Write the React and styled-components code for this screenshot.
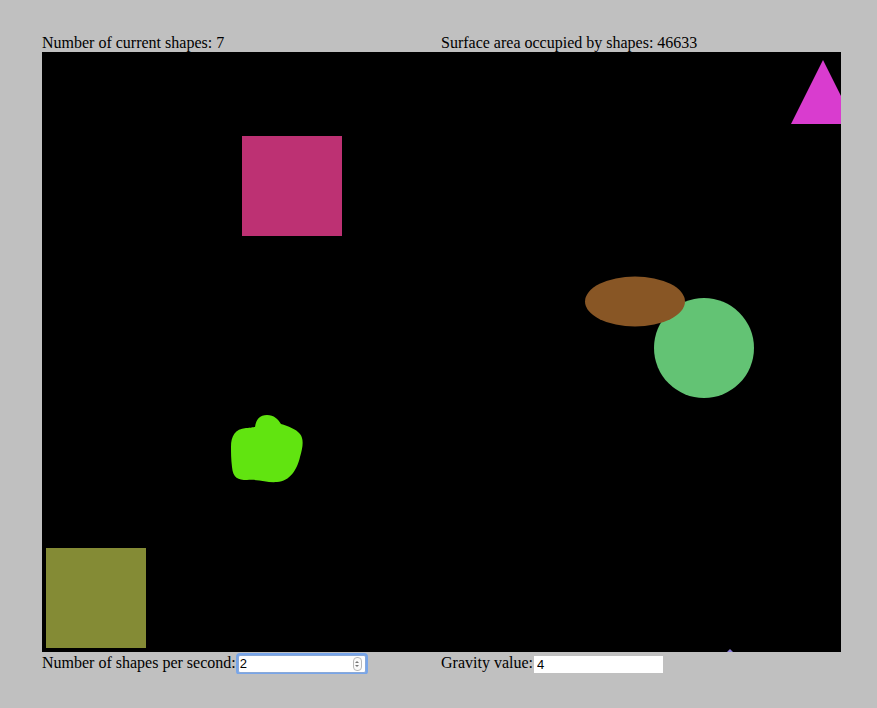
import React from "react";
import styled, { createGlobalStyle } from "styled-components";

const Global = createGlobalStyle`
  html, body { margin: 0; padding: 0; background: #c0c0c0; }
  body {
    font-family: "Liberation Serif", "Times New Roman", serif;
    font-size: 16px;
    color: #000;
  }
`;

const Page = styled.div`
  padding: 34px 0 0 42px;
`;

const Row = styled.div`
  display: grid;
  grid-template-columns: 399px 400px;
  width: 799px;
  align-items: center;
  height: ${(p) => p.$h}px;
  line-height: 18px;
`;

const Cell = styled.div`
  display: flex;
  align-items: center;
  white-space: nowrap;
`;

const Stage = styled.svg`
  display: block;
  width: 799px;
  height: 600px;
  background: #000;
`;

const Label = styled.span`
  margin-right: ${(p) => p.$gap}px;
`;

const NumberBox = styled.div`
  display: flex;
  align-items: center;
  width: 126px;
  height: 16px;
  margin-top: 1px;
  margin-left: 2px;
  background: #fff;
  border: 1px solid #8aa9d8;
  border-radius: 2px;
  box-shadow: 0 0 0 2px #77a5ea;
`;

const BareInput = styled.input`
  flex: 1;
  min-width: 0;
  border: none;
  outline: none;
  padding: 0 0 0 1px;
  margin: 0;
  height: 16px;
  background: transparent;
  font-family: "Liberation Sans", Arial, sans-serif;
  font-size: 13px;
  color: #000;
`;

const Spinner = styled.span`
  display: flex;
  flex-direction: column;
  align-items: center;
  justify-content: center;
  gap: 2px;
  width: 7px;
  height: 12px;
  margin-right: 3px;
  border: 1px solid #b8b8b8;
  border-radius: 4px;
  background: #fafafa;
`;

const Arrow = styled.span`
  width: 0;
  height: 0;
  border-left: 2px solid transparent;
  border-right: 2px solid transparent;
  ${(p) =>
    p.$up
      ? "border-bottom: 2px solid #777;"
      : "border-top: 2px solid #777;"}
`;

const TextInput = styled.input`
  width: 129px;
  height: 17px;
  box-sizing: border-box;
  border: none;
  outline: none;
  padding: 0 0 0 3px;
  margin: 2px 0 0 0;
  background: #fff;
  font-family: "Liberation Sans", Arial, sans-serif;
  font-size: 13px;
  color: #000;
`;

export default function App() {
  return (
    <>
      <Global />
      <Page>
        <Row $h={18}>
          <Cell>Number of current shapes: 7</Cell>
          <Cell>Surface area occupied by shapes: 46633</Cell>
        </Row>
        <Stage viewBox="0 0 799 600">
          <rect x="200" y="84" width="100" height="100" fill="#bd3173" />
          <polygon points="781,8 749,72 813,72" fill="#d93ccf" />
          <circle cx="662" cy="296" r="50" fill="#63c374" />
          <ellipse cx="593" cy="249.5" rx="50" ry="25" fill="#885625" />
          <path
            d="M189 395 C189 384 193 377 204 376 C209 376 211 375 213 375
               C214 367 218 363 225 363 C232 363 236 367 239 372
               C246 374 254 377 258 382 C262 387 261 395 258 405
               C255 418 248 429 235 430 C225 431 218 427 205 428
               C196 428 191 426 190 415 C189 407 189 400 189 395 Z"
            fill="#61e410"
          />
          <rect x="4" y="496" width="100" height="100" fill="#848b35" />
          <polygon points="688,597 681,604 695,604" fill="#8b7fd6" />
        </Stage>
        <Row $h={22}>
          <Cell>
            <Label $gap={0}>Number of shapes per second:</Label>
            <NumberBox>
              <BareInput type="text" defaultValue="2" />
              <Spinner>
                <Arrow $up />
                <Arrow />
              </Spinner>
            </NumberBox>
          </Cell>
          <Cell>
            <Label $gap={1}>Gravity value:</Label>
            <TextInput type="text" defaultValue="4" />
          </Cell>
        </Row>
      </Page>
    </>
  );
}
